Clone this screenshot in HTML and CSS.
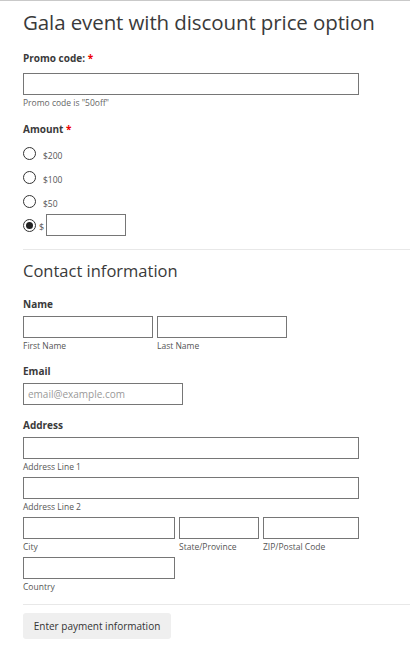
FILE: index.html
```html
<!DOCTYPE html>
<html>
<head>
<meta charset="utf-8">
<link rel="stylesheet" href="styles.css">
</head>
<body>
<div class="page">
  <form class="form">
    <h1 class="title">Gala event with discount price option</h1>

    <div class="field promo">
      <div class="label">Promo code: <span class="req">*</span></div>
      <input class="input w-full" type="text">
      <div class="help">Promo code is "50off"</div>
    </div>

    <div class="field amount">
      <div class="label">Amount <span class="req">*</span></div>
      <div class="radios">
        <label class="radio-row"><span class="radio"></span><span class="rlabel">$200</span></label>
        <label class="radio-row"><span class="radio"></span><span class="rlabel">$100</span></label>
        <label class="radio-row"><span class="radio"></span><span class="rlabel">$50</span></label>
        <label class="radio-row custom"><span class="radio checked"></span><span class="dollar">$</span><input class="input w-custom" type="text"></label>
      </div>
    </div>

    <hr class="divider first">

    <h2 class="section">Contact information</h2>

    <div class="field name">
      <div class="label">Name</div>
      <div class="row">
        <div class="col"><input class="input w-name" type="text"><div class="sub">First Name</div></div>
        <div class="col"><input class="input w-name" type="text"><div class="sub">Last Name</div></div>
      </div>
    </div>

    <div class="field email">
      <div class="label">Email</div>
      <input class="input w-email" type="text" placeholder="email@example.com">
    </div>

    <div class="field address">
      <div class="label">Address</div>
      <input class="input w-full" type="text">
      <div class="sub">Address Line 1</div>
      <input class="input w-full" type="text">
      <div class="sub">Address Line 2</div>
      <div class="row">
        <div class="col"><input class="input w-city" type="text"><div class="sub">City</div></div>
        <div class="col"><input class="input w-state" type="text"><div class="sub">State/Province</div></div>
        <div class="col"><input class="input w-zip" type="text"><div class="sub">ZIP/Postal Code</div></div>
      </div>
      <input class="input w-city" type="text">
      <div class="sub">Country</div>
    </div>

    <hr class="divider second">

    <button class="btn" type="button">Enter payment information</button>
  </form>
</div>
</body>
</html>
```

FILE: styles.css
```css
* { box-sizing: border-box; }
html, body { margin: 0; padding: 0; background: #fff; }
body {
  border-top: 1px solid #c9c9c9;
  font-family: "Open Sans", "Noto Sans", sans-serif;
  color: #333;
}
.form { padding: 0 0 0 23px; display: block; }
.title {
  margin: 0;
  padding-top: 7px;
  font-size: 20.5px;
  line-height: 28px;
  font-weight: 400;
  color: #3a3a3a;
  letter-spacing: -0.1px;
}
.label {
  font-size: 10px;
  font-weight: 700;
  line-height: 14px;
  color: #3a3a3a;
}
.req { color: #e00; }
.field.promo { margin-top: 15px; }
.input {
  display: block;
  height: 22px;
  border: 1px solid #767676;
  border-radius: 0;
  background: #fff;
  padding: 0 4px;
  margin: 0;
  font-family: inherit;
  font-size: 10px;
  outline: none;
}
.input::placeholder { color: #999; }
.w-full { width: 336px; }
.w-custom { width: 80px; }
.w-name { width: 130px; }
.w-email { width: 160px; }
.w-city { width: 152px; }
.w-state { width: 80px; }
.w-zip { width: 96px; }
.help {
  font-size: 8.5px;
  line-height: 12px;
  color: #666;
  margin-top: 2px;
}
.field.amount { margin-top: 13px; }
.radios { display: flex; flex-direction: column; margin-top: 5px; }
.radio-row { display: flex; align-items: center; height: 24px; }
.radio-row.custom { height: 22px; margin-top: 1px; }
.radio {
  width: 13px; height: 13px;
  border: 1px solid #333;
  border-radius: 50%;
  background: #fff;
  position: relative;
  flex: none;
}
.radio.checked::after {
  content: "";
  position: absolute;
  left: 2px; top: 2px;
  width: 7px; height: 7px;
  border-radius: 50%;
  background: #222;
}
.rlabel { font-size: 8.5px; color: #555; margin-left: 7px; margin-top: 4px; }
.dollar { font-size: 9px; color: #555; margin-left: 3px; margin-right: 2px; margin-top: 3px; }
.divider {
  border: 0;
  border-top: 1px solid #e8e8e8;
  margin: 0;
}
.divider.first { margin-top: 13px; }
.section {
  margin: 0;
  padding-top: 9px;
  font-size: 16.5px;
  line-height: 24px;
  font-weight: 400;
  color: #3a3a3a;
}
.field.name { margin-top: 14px; }
.field .label { margin-bottom: 5px; }
.promo .label { margin-bottom: 8px; }
.row { display: flex; gap: 4px; }
.sub {
  font-size: 8.5px;
  line-height: 12px;
  color: #555;
  margin-top: 2px;
  margin-bottom: 4px;
}
.field.email { margin-top: 8px; }
.field.address { margin-top: 13px; }
.divider.second { margin-top: 11px; }
.btn {
  margin-top: 8px;
  height: 26px;
  width: 148px;
  border: 0;
  border-radius: 3px;
  background: #efefef;
  color: #333;
  font-family: inherit;
  font-size: 10px;
  padding: 0;
}
```
